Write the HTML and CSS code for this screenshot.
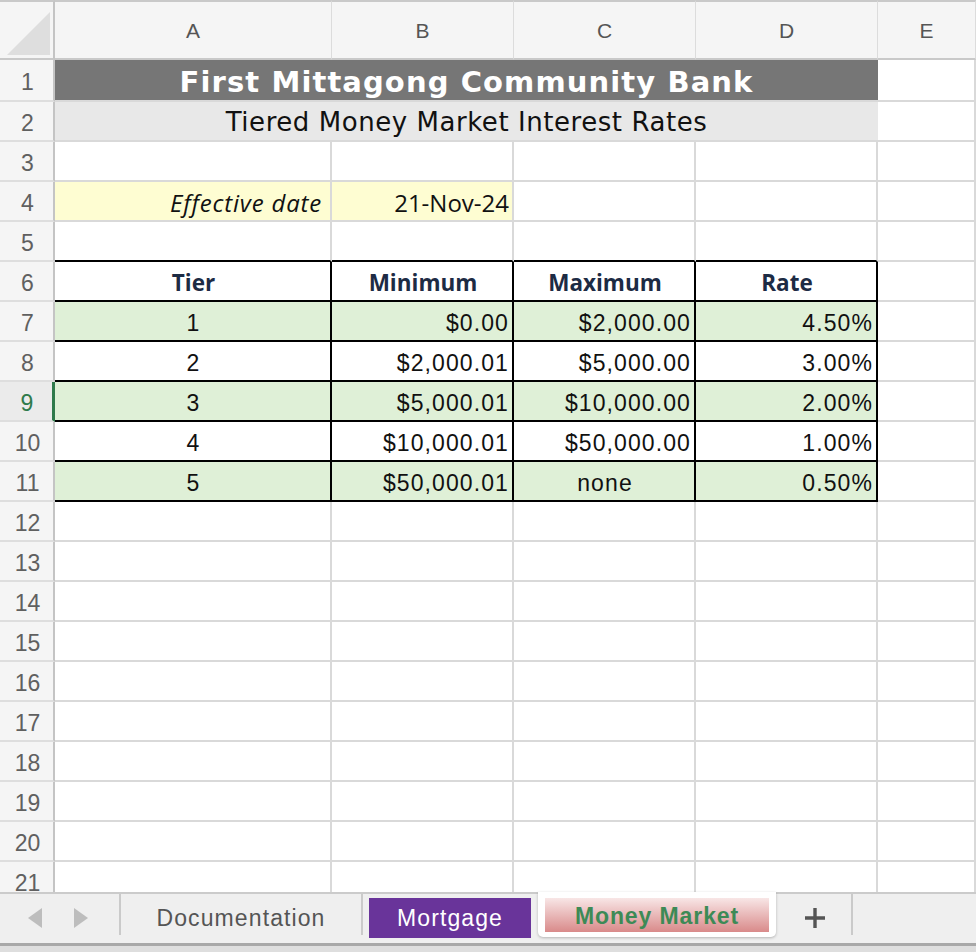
FILE: index.html
```html
<!DOCTYPE html>
<html>
<head>
<meta charset="utf-8">
<link rel="stylesheet" href="styles.css">
</head>
<body>
<div class="app">
  <div class="sheet">
    <div class="corner"><svg width="55" height="58" viewBox="0 0 55 58"><polygon points="7,53 50,53 50,10" fill="#dedede"/></svg></div>
    <div class="ch">A</div><div class="ch">B</div><div class="ch">C</div><div class="ch">D</div><div class="ch">E</div>

    <div class="rh">1</div>
    <div class="c title">First Mittagong Community Bank</div>
    <div class="c"></div>

    <div class="rh">2</div>
    <div class="c subtitle">Tiered Money Market Interest Rates</div>
    <div class="c"></div>

    <div class="rh">3</div>
    <div class="c"></div><div class="c"></div><div class="c"></div><div class="c"></div><div class="c"></div>

    <div class="rh">4</div>
    <div class="c yellow r label">Effective date</div>
    <div class="c yellow r date">21-Nov-24</div>
    <div class="c"></div><div class="c"></div><div class="c"></div>

    <div class="rh">5</div>
    <div class="c top"></div><div class="c top"></div><div class="c top"></div><div class="c top"></div><div class="c"></div>

    <div class="rh">6</div>
    <div class="c t hd">Tier</div>
    <div class="c t hd">Minimum</div>
    <div class="c t hd">Maximum</div>
    <div class="c t hd">Rate</div>
    <div class="c"></div>

    <div class="rh">7</div>
    <div class="c t g ctr">1</div>
    <div class="c t g r">$0.00</div>
    <div class="c t g r">$2,000.00</div>
    <div class="c t g r">4.50%</div>
    <div class="c"></div>

    <div class="rh">8</div>
    <div class="c t ctr">2</div>
    <div class="c t r">$2,000.01</div>
    <div class="c t r">$5,000.00</div>
    <div class="c t r">3.00%</div>
    <div class="c"></div>

    <div class="rh sel">9</div>
    <div class="c t g ctr">3</div>
    <div class="c t g r">$5,000.01</div>
    <div class="c t g r">$10,000.00</div>
    <div class="c t g r">2.00%</div>
    <div class="c"></div>

    <div class="rh">10</div>
    <div class="c t ctr">4</div>
    <div class="c t r">$10,000.01</div>
    <div class="c t r">$50,000.00</div>
    <div class="c t r">1.00%</div>
    <div class="c"></div>

    <div class="rh">11</div>
    <div class="c t g ctr">5</div>
    <div class="c t g r">$50,000.01</div>
    <div class="c t g ctr">none</div>
    <div class="c t g r">0.50%</div>
    <div class="c"></div>

    <div class="rh">12</div><div class="c"></div><div class="c"></div><div class="c"></div><div class="c"></div><div class="c"></div>
    <div class="rh">13</div><div class="c"></div><div class="c"></div><div class="c"></div><div class="c"></div><div class="c"></div>
    <div class="rh">14</div><div class="c"></div><div class="c"></div><div class="c"></div><div class="c"></div><div class="c"></div>
    <div class="rh">15</div><div class="c"></div><div class="c"></div><div class="c"></div><div class="c"></div><div class="c"></div>
    <div class="rh">16</div><div class="c"></div><div class="c"></div><div class="c"></div><div class="c"></div><div class="c"></div>
    <div class="rh">17</div><div class="c"></div><div class="c"></div><div class="c"></div><div class="c"></div><div class="c"></div>
    <div class="rh">18</div><div class="c"></div><div class="c"></div><div class="c"></div><div class="c"></div><div class="c"></div>
    <div class="rh">19</div><div class="c"></div><div class="c"></div><div class="c"></div><div class="c"></div><div class="c"></div>
    <div class="rh">20</div><div class="c"></div><div class="c"></div><div class="c"></div><div class="c"></div><div class="c"></div>
    <div class="rh">21</div><div class="c"></div><div class="c"></div><div class="c"></div><div class="c"></div><div class="c"></div>
  </div>

  <div class="tabbar">
    <div class="nav">
      <svg width="14" height="20" viewBox="0 0 14 20"><polygon points="14,0 14,20 0,10" fill="#bdbdbd"/></svg>
      <svg width="14" height="20" viewBox="0 0 14 20"><polygon points="0,0 0,20 14,10" fill="#bdbdbd"/></svg>
    </div>
    <div class="sep"></div>
    <div class="tab doc">Documentation</div>
    <div class="sep"></div>
    <div class="tab mort">Mortgage</div>
    <div class="tab active"><div class="inner">Money Market</div></div>
    <div class="plus"><svg width="20" height="20" viewBox="0 0 20 20"><path d="M10 0V20M0 10H20" stroke="#555" stroke-width="3.4"/></svg></div>
    <div class="sep"></div>
  </div>
  <div class="bottom"></div>
</div>
</body>
</html>
```

FILE: styles.css
```css
* { box-sizing: border-box; }
html, body { margin: 0; padding: 0; background: #fff; }
.app { width: 976px; height: 952px; overflow: hidden; display: flex; flex-direction: column; }

.sheet {
  display: grid;
  grid-template-columns: 55px 277px 182px 182px 182px 98px;
  grid-template-rows: 60px 42px repeat(20, 40px);
  height: 892px;
  overflow: hidden;
  flex: none;
  font-family: "Liberation Sans", Arial, sans-serif;
}

.corner {
  background: #f5f5f5;
  border-top: 2px solid #c9c9c9;
  border-right: 2px solid #c4c4c4;
  border-bottom: 2px solid #c9c9c9;
}
.corner svg { display: block; }

.ch {
  background: #f5f5f5;
  border-top: 2px solid #c9c9c9;
  border-right: 1px solid #dcdcdc;
  border-bottom: 2px solid #c9c9c9;
  display: flex; align-items: center; justify-content: center;
  color: #555; font-size: 21px; padding-top: 2px;
}

.rh {
  background: #f5f5f5;
  border-right: 2px solid #c4c4c4;
  border-bottom: 2px solid #dedede;
  display: flex; align-items: center; justify-content: center;
  color: #606060; font-size: 23px; padding-top: 4px; padding-left: 2px;
}
.rh.sel { background: #ebebeb; color: #2f7a4b; border-right: 3px solid #2f7a4b; }

.c {
  border-right: 2px solid #d9d9d9;
  border-bottom: 2px solid #d9d9d9;
  display: flex; align-items: center;
  padding: 5px 3px 0 5px;
  color: #111; font-size: 23px; letter-spacing: 1.1px;
  white-space: nowrap; overflow: hidden;
}
.r { justify-content: flex-end; }
.ctr { justify-content: center; }

.title {
  grid-column: span 4;
  background: #767676; color: #fff;
  justify-content: center;
  font-family: "DejaVu Sans", Verdana, sans-serif; font-weight: bold;
  font-size: 29px; letter-spacing: 1.1px; padding: 3px 0 0;
  border-right: none;
}
.subtitle {
  grid-column: span 4;
  background: #e8e8e8; color: #111;
  justify-content: center;
  font-family: "DejaVu Sans", Verdana, sans-serif;
  font-size: 26px; letter-spacing: 0.55px; padding: 2px 0 0;
  border-right: none;
}

.yellow { background: #fefdd2; }
.label { font-family: "Open Sans", sans-serif; font-style: italic; font-size: 24px; letter-spacing: 0.8px; padding-right: 8px; padding-top: 2px; }
.date { font-family: "Open Sans", sans-serif; font-size: 24px; letter-spacing: 0; padding-top: 2px; }

.top { border-bottom-color: #000; }
.t { border-right-color: #000; border-bottom-color: #000; }
.g { background: #dff0d7; }
.hd {
  justify-content: center;
  font-family: "Open Sans", sans-serif; font-weight: 700;
  font-size: 22.5px; letter-spacing: 0; color: #1d2b44; padding-top: 2px;
}

.tabbar {
  height: 51px; flex: none;
  background: #efefef;
  border-top: 2px solid #cbcbcb;
  display: flex; align-items: flex-start;
  font-family: "Liberation Sans", Arial, sans-serif;
  font-size: 23px; letter-spacing: 1.1px;
}
.nav { width: 119px; height: 40px; display: flex; align-items: center; gap: 32px; padding-left: 28px; margin-top: 4px; }
.nav svg { display: block; }
.sep { width: 2px; height: 41px; background: #cacaca; flex: none; }
.tab { display: flex; align-items: center; justify-content: center; flex: none; }
.doc { width: 240px; height: 40px; margin-top: 4px; color: #555; }
.mort { width: 162px; height: 40px; margin: 4px 7px 0 6px; background: #69349a; color: #fff; }
.active {
  width: 238px; height: 45px; margin-top: -2px;
  background: #fff; border-radius: 0 0 5px 5px;
  box-shadow: 0 1px 3px rgba(0,0,0,0.25);
  padding: 6px 7px 0;
  align-items: flex-start;
}
.active .inner {
  width: 224px; height: 34px;
  background: linear-gradient(#f8e6e6, #d98a8a);
  display: flex; align-items: center; justify-content: center;
  color: #3d8a56; font-weight: bold; letter-spacing: 0.9px; padding-top: 3px;
}
.plus { width: 75px; height: 40px; margin-top: 4px; display: flex; align-items: center; justify-content: center; padding-left: 2px; }
.plus svg { display: block; }

.bottom { flex: 1; background: #dedede; border-top: 3px solid #a8a8a8; }
```
